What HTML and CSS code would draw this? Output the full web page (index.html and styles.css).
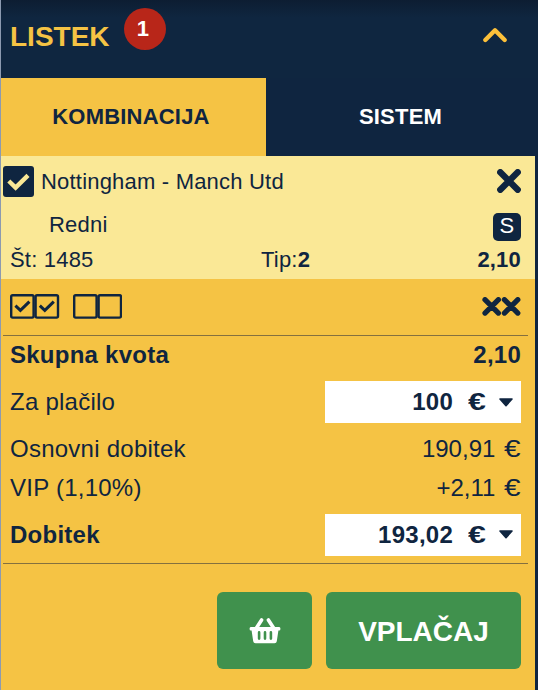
FILE: index.html
```html
<!DOCTYPE html>
<html lang="sl">
<head>
    <meta charset="UTF-8">
    <meta name="viewport" content="width=device-width, initial-scale=1.0">
    <title>Listek</title>
    <link rel="stylesheet" href="styles.css">
</head>
<body>
    <div class="slip">
        <div class="slip-header">
            <h1>LISTEK</h1>
            <span class="count">1</span>
            <svg class="chevron" width="26" height="18" viewBox="0 0 26 18">
                <path d="M3.3 14 L13 4.3 L22.7 14" />
            </svg>
        </div>

        <div class="tabs">
            <div class="tab active">KOMBINACIJA</div>
            <div class="tab">SISTEM</div>
        </div>

        <div class="bet">
            <div class="bet-title">
                <svg class="check" width="31" height="31" viewBox="0 0 31 31">
                    <rect width="31" height="31" rx="3" />
                    <path d="M5.8 15 L12.6 21.6 L25 9.4" />
                </svg>
                <span class="match">Nottingham - Manch Utd</span>
                <svg class="cross" width="24" height="24" viewBox="0 0 24 24">
                    <path d="M3.3 3.3 L20.7 20.7 M20.7 3.3 L3.3 20.7" />
                </svg>
            </div>
            <div class="bet-type">
                <span class="type">Redni</span>
                <span class="single">S</span>
            </div>
            <div class="bet-info">
                <span class="number">Št: 1485</span>
                <span class="tip">Tip:<b>2</b></span>
                <b class="odds">2,10</b>
            </div>
        </div>

        <div class="tools">
            <svg class="boxes" width="112" height="25" viewBox="0 0 112 25">
                <rect x="1.2" y="1.2" width="22.4" height="22.4" rx="1.5" />
                <rect x="25.6" y="1.2" width="22.4" height="22.4" rx="1.5" />
                <rect x="64.2" y="1.2" width="22.4" height="22.4" rx="1.5" />
                <rect x="88.6" y="1.2" width="22.4" height="22.4" rx="1.5" />
                <path d="M5.4 11.6 L10.4 16.4 L19.4 7.6 M29.8 11.6 L34.8 16.4 L43.8 7.6" />
            </svg>
            <svg class="crosses" width="39" height="19" viewBox="0 0 39 19">
                <path d="M3 2.7 L16.4 16.1 M16.4 2.7 L3 16.1 M22.4 2.7 L35.8 16.1 M35.8 2.7 L22.4 16.1" />
            </svg>
        </div>

        <div class="totals">
            <div class="row total"><b>Skupna kvota</b><b>2,10</b></div>
            <div class="row stake">
                <span>Za plačilo</span>
                <div class="amount">
                    <span class="value">100</span><span class="euro">€</span>
                    <svg class="caret" width="16" height="9" viewBox="0 0 16 9"><path d="M2 1 H14 L8 7.6 Z" /></svg>
                </div>
            </div>
            <div class="row basic"><span>Osnovni dobitek</span><span class="sum">190,91 <span class="sign">€</span></span></div>
            <div class="row vip"><span>VIP (1,10%)</span><span class="sum">+2,11 <span class="sign">€</span></span></div>
            <div class="row win">
                <b>Dobitek</b>
                <div class="amount">
                    <span class="value">193,02</span><span class="euro">€</span>
                    <svg class="caret" width="16" height="9" viewBox="0 0 16 9"><path d="M2 1 H14 L8 7.6 Z" /></svg>
                </div>
            </div>
        </div>

        <div class="buttons">
            <button type="button" class="btn basket">
                <svg width="32" height="26" viewBox="0 0 32 26">
                    <path class="handle" d="M12.6 2 L7.4 10 M19.4 2 L24.6 10" />
                    <path class="basket-body" d="M1.8 9 H30.2 Q31.4 9 31.4 10.5 V11 Q31.4 12.6 30.2 12.6 H29.4 L27.8 23.2 Q27.5 25.2 25.5 25.2 H6.5 Q4.5 25.2 4.2 23.2 L2.6 12.6 H1.8 Q0.6 12.6 0.6 11 V10.5 Q0.6 9 1.8 9 Z" />
                    <path class="slots" d="M10.1 14.4 V20.6 M16 14.4 V20.6 M21.9 14.4 V20.6" />
                </svg>
            </button>
            <button type="button" class="btn pay">VPLAČAJ</button>
        </div>
    </div>
</body>
</html>
```

FILE: styles.css
```css
* {
    box-sizing: border-box;
}

body {
    margin: 0;
    font-family: "Liberation Sans", Arial, sans-serif;
    font-size: 22px;
    letter-spacing: 0.2px;
    color: #0f2540;
    background-color: #0f2540;
}

svg {
    display: block;
    fill: none;
    stroke: #0f2540;
    stroke-linecap: round;
    stroke-linejoin: round;
    flex: none;
}

.slip {
    width: 535px;
    height: 690px;
    border-left: 1px solid #8c9ab0;
    background-color: #f5c344;
}

.slip-header {
    display: flex;
    align-items: flex-start;
    width: 537px;
    height: 78px;
    background: linear-gradient(#0d1d32, #0f2640 18px);
}

h1 {
    margin: 21px 0 0 9px;
    width: 114px;
    font-size: 28px;
    letter-spacing: 0;
    line-height: 32px;
    color: #f5c344;
}

.count {
    width: 42px;
    height: 42px;
    margin-top: 8px;
    border-radius: 50%;
    background-color: #b82619;
    color: #fff;
    font-size: 22px;
    font-weight: bold;
    line-height: 41px;
    padding-right: 4px;
    text-align: center;
}

.chevron {
    margin: 26px 30px 0 auto;
    stroke: #fcc03a;
    stroke-width: 4.4;
}

.tabs {
    display: flex;
    height: 78px;
    background-color: #0f2540;
}

.tab {
    width: 269px;
    line-height: 77px;
    text-align: center;
    font-weight: bold;
    color: #fff;
}

.tab.active {
    width: 265px;
    padding-right: 5px;
    color: #0f2540;
    background-color: #f5c344;
}

.bet {
    height: 123px;
    padding: 9px 14px 0 2px;
    background-color: #fae896;
}

.bet-title {
    display: flex;
    align-items: center;
    height: 32px;
}

.check rect {
    fill: #0f2540;
    stroke: none;
}

.check path {
    stroke: #fae896;
    stroke-width: 4.4;
    stroke-linecap: butt;
    stroke-linejoin: miter;
}

.match {
    margin-left: 7px;
    padding-top: 2px;
}

.cross {
    margin-left: auto;
    stroke-width: 6.4;
}

.bet-type {
    display: flex;
    justify-content: space-between;
    height: 44px;
    padding: 16px 0 0 46px;
}

.type {
    line-height: 24px;
}

.single {
    width: 28px;
    height: 28px;
    border-radius: 5px;
    background-color: #0f2540;
    color: #fff;
    line-height: 26px;
    text-align: center;
}

.bet-info {
    display: grid;
    grid-template-columns: 251px 1fr auto;
    padding-left: 7px;
    line-height: 38px;
}

.tools {
    display: flex;
    justify-content: space-between;
    height: 56px;
    padding: 15px 14px 0 9px;
}

.boxes {
    stroke-width: 2.4;
}

.boxes path {
    stroke-width: 3;
    stroke-linecap: butt;
    stroke-linejoin: miter;
}

.crosses {
    margin-top: 3px;
    stroke-width: 5.2;
}

.totals {
    height: 229px;
    margin: 0 7px 0 2px;
    padding: 0 7px;
    border-top: 1px solid #84703f;
    border-bottom: 1px solid #84703f;
    font-size: 24px;
    letter-spacing: 0.25px;
}

.row {
    display: flex;
    justify-content: space-between;
    align-items: center;
}

.total {
    height: 38px;
}

.stake {
    height: 56px;
}

.basic {
    height: 38px;
}

.vip {
    height: 40px;
}

.win {
    height: 53px;
}

.sum {
    letter-spacing: 0;
    word-spacing: 2px;
}

/* the euro sign is set wider than the digits */
.sign {
    display: inline-block;
    width: 17px;
    transform: scaleX(1.24);
    transform-origin: left;
}

.amount {
    display: flex;
    align-items: center;
    justify-content: flex-end;
    width: 196px;
    height: 42px;
    padding-right: 7px;
    background-color: #fff;
    font-weight: bold;
}

.euro {
    width: 18px;
    margin: 0 12px 0 15px;
    transform: scaleX(1.34);
    transform-origin: left;
}

.value {
    margin-right: 0;
}

.caret path {
    fill: #0f2540;
    stroke-width: 1.6;
}

.buttons {
    display: flex;
    justify-content: flex-end;
    gap: 14px;
    padding: 28px 14px 0 0;
}

.btn {
    display: flex;
    align-items: center;
    justify-content: center;
    height: 77px;
    padding: 0;
    border: none;
    border-radius: 6px;
    background-color: #40914d;
    color: #fff;
    font-family: inherit;
    font-size: 28px;
    font-weight: bold;
}

.basket {
    width: 95px;
}

.pay {
    width: 195px;
    padding-top: 2px;
}

.handle {
    stroke: #fff;
    stroke-width: 3.6;
}

.basket-body {
    fill: #fff;
    stroke: none;
}

.slots {
    stroke: #40914d;
    stroke-width: 2.6;
}
```
